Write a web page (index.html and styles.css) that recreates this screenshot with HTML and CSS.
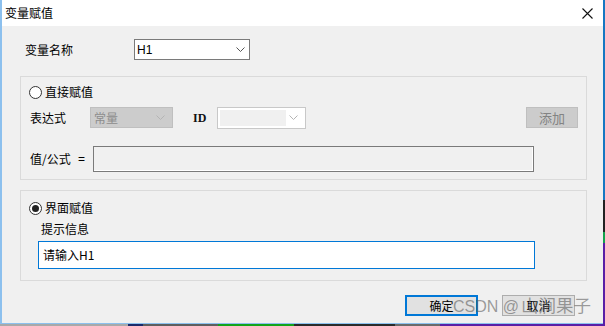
FILE: index.html
```html
<!DOCTYPE html>
<html lang="zh-CN">
<head>
<meta charset="utf-8">
<title>变量赋值</title>
<link rel="stylesheet" href="styles.css">
</head>
<body>
<div class="screen">
  <div class="top">
    <div class="window">
      <div class="titlebar">
        <span class="title">变量赋值</span>
        <svg class="close" width="11" height="11" viewBox="0 0 11 11"><path d="M0.5 0.5 L10.5 10.5 M10.5 0.5 L0.5 10.5" stroke="#111" stroke-width="1.1" fill="none"/></svg>
      </div>
      <div class="content">
        <div class="name-row">
          <span class="name-label">变量名称</span>
          <div class="combo name-combo">
            <span>H1</span>
            <svg class="chev" width="9" height="5" viewBox="0 0 9 5"><path d="M0.5 0.5 L4.5 4.5 L8.5 0.5" stroke="#555" stroke-width="1" fill="none"/></svg>
          </div>
        </div>

        <div class="group group1">
          <div class="radio-row">
            <span class="radio"></span><span class="radio-text">直接赋值</span>
          </div>
          <div class="expr-row">
            <span class="expr-label">表达式</span>
            <div class="combo combo-disabled">
              <span>常量</span>
              <svg class="chev" width="9" height="5" viewBox="0 0 9 5"><path d="M0.5 0.5 L4.5 4.5 L8.5 0.5" stroke="#b4b4b4" stroke-width="1" fill="none"/></svg>
            </div>
            <span class="id-label">ID</span>
            <div class="id-combo">
              <span class="id-inner"></span>
              <svg class="chev" width="9" height="5" viewBox="0 0 9 5"><path d="M0.5 0.5 L4.5 4.5 L8.5 0.5" stroke="#b4b4b4" stroke-width="1" fill="none"/></svg>
            </div>
            <span class="btn btn-disabled">添加</span>
          </div>
          <div class="value-row">
            <span class="value-label">值/公式</span>
            <span class="eq">=</span>
            <div class="field-readonly"></div>
          </div>
        </div>

        <div class="group group2">
          <div class="radio-row">
            <span class="radio checked"></span><span class="radio-text">界面赋值</span>
          </div>
          <div class="hint-label">提示信息</div>
          <div class="input-focus">请输入H1</div>
        </div>

        <div class="buttons">
          <span class="btn btn-default">确定</span>
          <span class="btn btn-cancel">取消</span>
          <span class="watermark"><span class="wm-latin">CSDN @</span><span class="wm-cjk">山涧果子</span></span>
        </div>
      </div>
    </div>
    <div class="edge"></div>
  </div>
  <div class="taskbar"></div>
</div>
</body>
</html>
```

FILE: styles.css
```css
* { box-sizing: border-box; }

body {
  margin: 0;
  width: 605px;
  height: 326px;
  overflow: hidden;
  font-family: "Noto Sans CJK SC", "Liberation Sans", sans-serif;
  font-size: 12px;
  line-height: 16px;
  color: #000;
  background: #a8a8a8;
}

.screen {
  display: flex;
  flex-direction: column;
  width: 605px;
  height: 326px;
}

.top {
  display: flex;
  height: 324px;
}

.window {
  width: 603px;
  height: 324px;
  border-left: 2px solid #8cc0ee;
  border-bottom: 1px solid #8cc0ee;
  background: #f0f0f0;
  display: flex;
  flex-direction: column;
}

.edge {
  width: 2px;
  background: linear-gradient(#1677c2 0 200px, #222 200px 232px, #14a24c 232px 243px, #5a1ea6 243px);
}

.taskbar {
  height: 2px;
  background: linear-gradient(to right,
    #a9a9a9 0 128px, #1b2a6a 128px 143px, #5e5e5e 143px 218px,
    #12a41a 218px 294px, #2a2a2a 294px 395px, #6a6a6a 395px 440px,
    #5a1ea6 440px 605px);
}

.titlebar {
  height: 26px;
  background: #fff;
  display: flex;
  align-items: center;
  justify-content: space-between;
  padding-left: 3px;
  padding-right: 10px;
}

.title {
  font-size: 12px;
  line-height: 16px;
}

.close { display: block; }

.content {
  display: flex;
  flex-direction: column;
  align-items: flex-start;
}

/* row 1 */
.name-row {
  display: flex;
  align-items: center;
  margin-top: 13px;
  margin-left: 23px;
}

.name-label {
  width: 109px;
}

.combo {
  display: flex;
  align-items: center;
  justify-content: space-between;
  height: 21px;
  border: 1px solid #7a7a7a;
  background: #fff;
}

.name-combo {
  width: 116px;
  padding-left: 2px;
  padding-right: 4px;
  font-family: "Liberation Sans", sans-serif;
}

.chev { display: block; }

/* groups */
.group {
  margin-left: 18px;
  width: 567px;
  border: 1px solid #dadada;
  display: flex;
  flex-direction: column;
  align-items: flex-start;
}

.group1 {
  margin-top: 16px;
  height: 104px;
  padding-top: 7px;
}

.group2 {
  margin-top: 10px;
  height: 91px;
  padding-top: 9px;
}

.radio-row {
  display: flex;
  align-items: center;
  height: 16px;
  margin-left: 8px;
}

.radio {
  width: 13px;
  height: 13px;
  border: 1px solid #333;
  border-radius: 50%;
  background: #fff;
  display: flex;
  align-items: center;
  justify-content: center;
}

.radio.checked::after {
  content: "";
  width: 7px;
  height: 7px;
  border-radius: 50%;
  background: #222;
}

.radio-text {
  margin-left: 3px;
}

/* expression row */
.expr-row {
  display: flex;
  align-items: center;
  margin-top: 7px;
  margin-left: 9px;
  width: 548px;
  height: 21px;
}

.expr-label { width: 60px; }

.combo-disabled {
  width: 83px;
  background: #cccccc;
  border-color: #bfbfbf;
  color: #8c8c8c;
  padding-left: 3px;
  padding-right: 7px;
}

.id-label {
  margin-left: 20px;
  width: 24px;
  font-family: "Liberation Serif", serif;
  font-weight: bold;
  font-size: 12px;
  color: #111;
}

.id-combo {
  width: 89px;
  height: 22px;
  border: 1px solid #c8c8c8;
  background: #fff;
  display: flex;
  align-items: center;
  padding: 2px 7px 2px 2px;
  justify-content: space-between;
}

.id-inner {
  width: 66px;
  height: 16px;
  background: #f0f0f0;
}

.btn {
  display: flex;
  align-items: center;
  justify-content: center;
  width: 73px;
  height: 21px;
  background: #e1e1e1;
  border: 1px solid #adadad;
}

.btn-disabled {
  margin-left: auto;
  width: 52px;
  background: #cccccc;
  border-color: #bfbfbf;
  color: #838383;
  font-size: 13px;
}

/* value row */
.value-row {
  display: flex;
  align-items: center;
  margin-top: 18px;
  margin-left: 9px;
  height: 26px;
}

.value-label { width: 48px; }

.eq {
  width: 15px;
  font-family: "Liberation Sans", sans-serif;
}

.field-readonly {
  width: 441px;
  height: 26px;
  border: 1px solid #7a7a7a;
  background: #f0f0f0;
  box-shadow: inset -1px -1px 0 #fff;
}

/* group 2 */
.hint-label {
  margin-top: 5px;
  margin-left: 20px;
}

.input-focus {
  margin-top: 4px;
  margin-left: 17px;
  width: 497px;
  height: 28px;
  border: 1px solid #0078d7;
  background: #fff;
  padding-left: 4px;
  display: flex;
  align-items: center;
}

/* buttons */
.buttons {
  position: relative;
  display: flex;
  margin-top: 14px;
  margin-left: 403px;
  gap: 24px;
}

.btn-default {
  border: 2px solid #0078d7;
}

.watermark {
  position: absolute;
  left: 48px;
  top: -1px;
  display: flex;
  align-items: baseline;
  line-height: 22px;
  color: rgba(95, 95, 95, 0.6);
  white-space: nowrap;
  pointer-events: none;
}

.wm-latin {
  font-family: "Liberation Sans", sans-serif;
  font-size: 16px;
  margin-right: 2px;
}

.wm-cjk {
  font-family: "Noto Sans CJK SC", sans-serif;
  font-size: 17.5px;
}
```
